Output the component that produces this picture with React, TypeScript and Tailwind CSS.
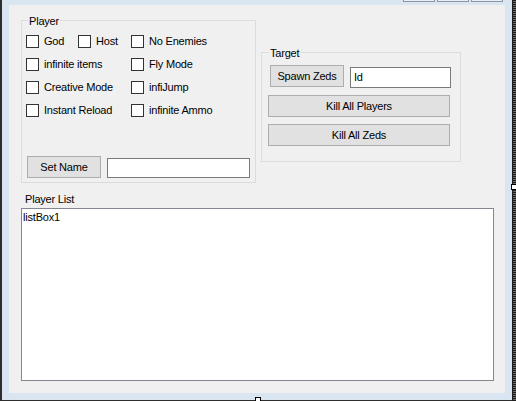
import React from "react";

const font = { fontFamily: '"Liberation Sans", Arial, sans-serif' };

function Check({ label, w }: { label: string; w?: string }) {
  return (
    <div className={`flex items-start h-[13px] ${w ?? ""}`}>
      <div className="w-[13px] h-[13px] border border-[#333333] bg-white shrink-0" />
      <span className="ml-[5px] text-[11px] leading-[13px] tracking-[-0.2px] text-black whitespace-nowrap">{label}</span>
    </div>
  );
}

function Btn({ label, w }: { label: string; w: string }) {
  return (
    <div className={`${w} h-[22px] bg-[#e1e1e1] border border-[#adadad] flex items-center justify-center text-[11px] tracking-[-0.2px] text-black leading-[13px]`}>
      {label}
    </div>
  );
}

export default function App() {
  return (
    <div className="relative flex w-[516px] h-[401px] overflow-hidden bg-[#dae5f2]" style={font}>
      <div className="w-[512px] h-[401px] flex flex-col bg-[#dae5f2] border-l-2 border-b border-[#2e2e2e] pt-[5px] pl-[7px] pr-[7px] pb-[7px]">
        <div className="w-[496px] h-[388px] bg-[#f0f0f0] flex flex-col pl-[12px]">
          <div className="flex items-start pt-[15px]">
            {/* Player group */}
            <div className="relative w-[235px] h-[163px] border border-[#dcdcdc] pl-[4px] pt-[14px] flex flex-col">
              <span className="absolute left-[6px] top-[-6px] px-[1px] bg-[#f0f0f0] text-[11px] leading-[13px] tracking-[-0.2px] text-black">Player</span>
              <div className="flex flex-col gap-[10px]">
                <div className="flex">
                  <div className="w-[105px] flex">
                    <Check label="God" w="w-[52px]" />
                    <Check label="Host" />
                  </div>
                  <Check label="No Enemies" />
                </div>
                <div className="flex">
                  <Check label="infinite items" w="w-[105px]" />
                  <Check label="Fly Mode" />
                </div>
                <div className="flex">
                  <Check label="Creative Mode" w="w-[105px]" />
                  <Check label="infiJump" />
                </div>
                <div className="flex">
                  <Check label="Instant Reload" w="w-[105px]" />
                  <Check label="infinite Ammo" />
                </div>
              </div>
              <div className="flex items-start mt-[39px] ml-[1px]">
                <Btn label="Set Name" w="w-[74px]" />
                <div className="ml-[6px] mt-[2px] w-[143px] h-[20px] bg-white border border-[#7a7a7a]" />
              </div>
            </div>
            {/* Target group */}
            <div className="relative ml-[5px] mt-[32px] w-[200px] h-[110px] border border-[#dcdcdc] pl-[8px] pt-[12px] flex flex-col">
              <span className="absolute left-[7px] top-[-6px] px-[1px] bg-[#f0f0f0] text-[11px] leading-[13px] tracking-[-0.2px] text-black">Target</span>
              <div className="flex items-start">
                <Btn label="Spawn Zeds" w="w-[74px]" />
                <div className="ml-[6px] mt-[2px] w-[101px] h-[21px] bg-white border border-[#7a7a7a] flex items-center pl-[3px] text-[11px] tracking-[-0.2px] leading-[13px] text-black">Id</div>
              </div>
              <div className="-ml-[2px] mt-[7px] flex flex-col gap-[7px]">
                <Btn label="Kill All Players" w="w-[182px]" />
                <Btn label="Kill All Zeds" w="w-[182px]" />
              </div>
            </div>
          </div>
          <div className="mt-[10px] pl-[4px] text-[11px] leading-[13px] tracking-[-0.2px] text-black">Player List</div>
          <div className="mt-[2px] w-[473px] h-[173px] bg-white border border-[#828790] pl-[1px] pt-[2px] text-[11px] leading-[13px] tracking-[-0.2px] text-black">
            listBox1
          </div>
        </div>
      </div>
      <div className="w-[4px] h-[401px] bg-[repeating-linear-gradient(0deg,#1e1e1e_0px,#1e1e1e_1px,#6a6a6a_1px,#6a6a6a_2px)] border-l border-[#1e1e1e]" />
      {/* window title buttons (cut off) */}
      <div className="absolute top-0 left-[403px] w-[32px] h-[2px] bg-[#e9eef5] border-x border-b border-[#8b95a5]" />
      <div className="absolute top-0 left-[437px] w-[32px] h-[2px] bg-[#e9eef5] border-x border-b border-[#8b95a5]" />
      <div className="absolute top-0 left-[471px] w-[32px] h-[2px] bg-[#e9eef5] border-x border-b border-[#8b95a5]" />
      {/* designer resize handles */}
      <div className="absolute left-[511px] top-[184px] w-[6px] h-[6px] bg-white border border-black" />
      <div className="absolute left-[255px] top-[397px] w-[6px] h-[6px] bg-white border border-black" />
    </div>
  );
}
